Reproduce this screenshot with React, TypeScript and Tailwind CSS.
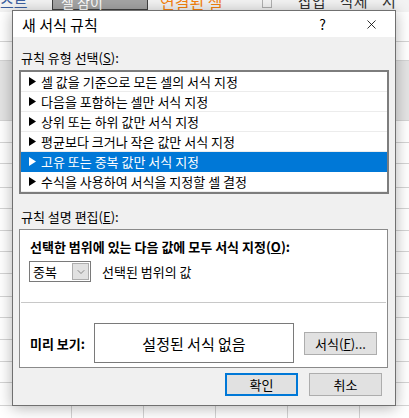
import { ChevronDown, X } from "lucide-react";

const rules = [
  "셀 값을 기준으로 모든 셀의 서식 지정",
  "다음을 포함하는 셀만 서식 지정",
  "상위 또는 하위 값만 서식 지정",
  "평균보다 크거나 작은 값만 서식 지정",
  "고유 또는 중복 값만 서식 지정",
  "수식을 사용하여 서식을 지정할 셀 결정",
];

const font = "font-['Malgun_Gothic','Noto_Sans_CJK_KR',sans-serif]";

function Arrow({ selected }: { selected: boolean }) {
  return (
    <svg width="7" height="9" viewBox="0 0 7 9" className="shrink-0">
      <path d="M0 0 L7 4.5 L0 9 Z" fill={selected ? "#ffffff" : "#000000"} />
    </svg>
  );
}

function Sheet() {
  const rows = [30, 19, 60, 22, 21, 24, 21, 22, 21, 22, 23, 21, 22, 22, 21, 23, 21];
  return (
    <div className="absolute inset-0 bg-white">
      {/* ribbon strip peeking above the dialog */}
      <div className="relative h-[12px] overflow-hidden bg-[#f3f3f3]">
        <span className="absolute left-[0px] top-[-9px] text-[15px] text-[#3b5fa0]">스트</span>
        <div className="absolute left-[52px] top-[-6px] h-[16px] w-[96px] border border-[#404040] bg-[#a5a5a5]">
          <span className="ml-[8px] block text-[14px] leading-[14px] text-white">셀 참이</span>
        </div>
        <span className="absolute left-[160px] top-[-10px] text-[16px] text-[#f5820f]">연결된 셀</span>
        <div className="absolute left-[262px] top-[-4px] h-[12px] w-[10px] border border-[#b0b0b0]" />
        <span className="absolute left-[298px] top-[-10px] text-[15px] text-[#333]">삽입</span>
        <span className="absolute left-[340px] top-[-10px] text-[15px] text-[#333]">삭제</span>
        <span className="absolute left-[382px] top-[-10px] text-[15px] text-[#333]">서식</span>
      </div>
      <div className="flex flex-col">
        {rows.map((h, i) => (
          <div
            key={i}
            style={{ height: h }}
            className={`flex border-b border-[#d4d4d4] ${i === 2 ? "bg-[#e4e4e4]" : "bg-white"}`}
          >
            {Array.from({ length: 6 }).map((_, j) => (
              <div key={j} className="h-full w-[72px] shrink-0 border-r border-[#d4d4d4]" />
            ))}
          </div>
        ))}
      </div>
    </div>
  );
}

export default function App() {
  return (
    <div className={`relative h-[418px] w-[409px] overflow-hidden ${font}`}>
      <Sheet />
      <div className="absolute left-[12px] top-[10px] flex h-[396px] w-[384px] flex-col border border-[#707070] bg-[#f0f0f0] shadow-[0_2px_14px_rgba(0,0,0,0.3)]">
        {/* title bar */}
        <div className="flex h-[26px] items-center bg-white pl-[9px] pr-[16px]">
          <span className="text-[15px] leading-none text-black">새 서식 규칙</span>
          <span className="ml-auto mr-[38px] text-[14px] leading-none text-black">?</span>
          <X size={15} strokeWidth={1.3} className="text-black" />
        </div>

        <div className="flex flex-col px-[6px] text-[13px] text-black">
          <div className="mt-[12px] pl-[2px] leading-[17px]">
            규칙 유형 선택(<span className="underline">S</span>):
          </div>
          <div className="mt-[4px] h-[124px] w-[370px] border-2 border-[#7d7d7d] bg-white">
            {rules.map((r, i) => {
              const sel = i === 4;
              return (
                <div
                  key={r}
                  className={`flex h-[20px] items-center gap-[5px] border-b pl-[8px] ${
                    sel ? "border-[#0078d7] bg-[#0078d7] text-white" : "border-[#ececec]"
                  }`}
                >
                  <Arrow selected={sel} />
                  <span className="whitespace-nowrap leading-none">{r}</span>
                </div>
              );
            })}
          </div>

          <div className="mt-[14px] pl-[2px] leading-[17px]">
            규칙 설명 편집(<span className="underline">E</span>):
          </div>
          <div className="mt-[4px] flex h-[139px] w-[369px] flex-col border border-[#8a8a8a] bg-white">
            <div className="mt-[8px] pl-[10px] font-bold leading-[17px]">
              선택한 범위에 있는 다음 값에 모두 서식 지정(<span className="underline">O</span>):
            </div>
            <div className="mt-[6px] flex items-center pl-[9px]">
              <div className="flex h-[21px] w-[62px] items-center border border-[#7a7a7a] bg-white">
                <span className="pl-[3px] leading-none">중복</span>
                <div className="ml-auto mr-[1px] flex h-[17px] w-[17px] items-center justify-center border border-[#adadad] bg-[#e1e1e1]">
                  <ChevronDown size={12} strokeWidth={1.4} className="text-[#606060]" />
                </div>
              </div>
              <span className="ml-[11px] leading-none">선택된 범위의 값</span>
            </div>
            <div className="mx-[1px] mt-[20px] h-px bg-[#c8c8c8]" />
            <div className="mt-[20px] flex items-center pl-[10px]">
              <span className="w-[64px] font-bold leading-none">미리 보기:</span>
              <div className="flex h-[40px] w-[200px] items-center justify-center border border-[#7a7a7a] bg-white">
                <span className="text-[15px] leading-none">설정된 서식 없음</span>
              </div>
              <div className="ml-[10px] flex h-[23px] w-[73px] items-center justify-center border border-[#adadad] bg-[#e1e1e1]">
                <span className="leading-none">
                  서식(<span className="underline">F</span>)...
                </span>
              </div>
            </div>
          </div>

          <div className="mt-[5px] flex justify-end gap-[11px] pr-[7px]">
            <div className="flex h-[23px] w-[73px] items-center justify-center border-2 border-[#0078d7] bg-[#e1e1e1]">
              <span className="leading-none">확인</span>
            </div>
            <div className="flex h-[23px] w-[73px] items-center justify-center border border-[#adadad] bg-[#e1e1e1]">
              <span className="leading-none">취소</span>
            </div>
          </div>
        </div>
      </div>
    </div>
  );
}
